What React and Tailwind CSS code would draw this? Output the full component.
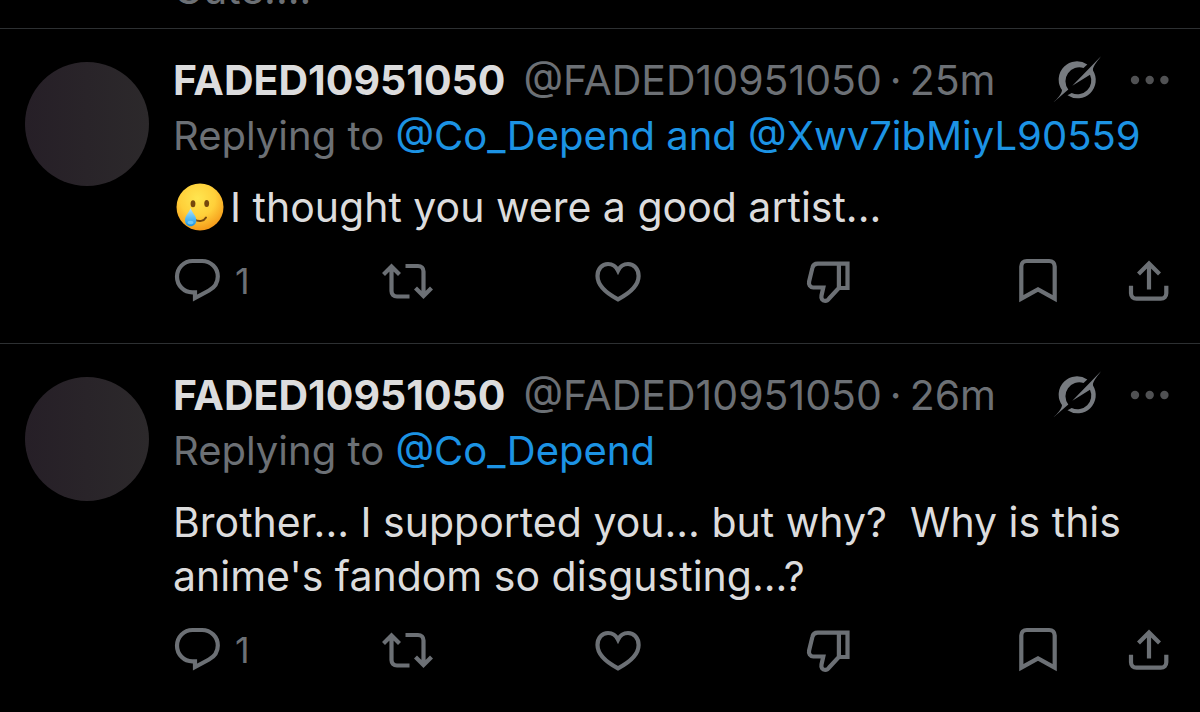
import React from 'react';

const tweets = [
  {
    id: 1,
    name: 'FADED10951050',
    handle: '@FADED10951050',
    time: '25m',
    replyingTo: ['@Co_Depend', '@Xwv7ibMiyL90559'],
    tearEmoji: true,
    text: 'I thought you were a good artist...',
    replies: 1,
  },
  {
    id: 2,
    name: 'FADED10951050',
    handle: '@FADED10951050',
    time: '26m',
    replyingTo: ['@Co_Depend'],
    tearEmoji: false,
    text: "Brother... I supported you... but why?\u00a0 Why is this anime's fandom so disgusting...?",
    replies: 1,
  },
];

const Icon = ({ children }) => (
  <svg
    viewBox="0 0 48 48"
    className="size-12 shrink-0 overflow-visible"
    fill="none"
    stroke="currentColor"
    strokeWidth="4.2"
    aria-hidden="true"
  >
    {children}
  </svg>
);

const ReplyIcon = () => (
  <Icon>
    <path d="M19.500 4h9.500C38 4 44.800 11 44.800 19.500c0 6.500-3.300 11-8.800 14L22 41V35.300h-2.500C10.800 35.300 4 28.300 4 19.700S10.800 4 19.500 4Z" />
  </Icon>
);

const RepostIcon = () => (
  <Icon>
    <path d="M.5 17.500l8-8 8 8M8.500 10v24c0 3.300 2.200 5.500 5.500 5.500h12.500M22.500 9H35c3.300 0 5.500 2.200 5.500 5.500V38.500M32.500 31l8 8 8-8" />
  </Icon>
);

const LikeIcon = () => (
  <Icon>
    <path d="M24 13.500C22 9.500 18 7 14 7 8 7 3.500 12 3.500 19c0 8.500 7.500 16.500 20.500 23.300C37 35.500 44.600 27.500 44.600 19c0-7-4.600-12-10.600-12-4 0-8 2.500-10 6.500Z" />
  </Icon>
);

const DislikeIcon = () => (
  <Icon>
    <path d="M34.900 6.700H13.700c-2.800 0-4.700 1.400-5.300 4.200L5.100 24.500c-.7 3.200 1 6 4.200 6h10l-1.800 8c-.6 3.200.9 5.400 3.600 5.400 2 0 3.300-1 4.200-2.600L34.900 31ZM34.900 6.700h8.600V31h-8.600" />
  </Icon>
);

const BookmarkIcon = () => (
  <Icon>
    <path d="M7.300 41.700V9.500C7.300 6.200 9.500 4 12.800 4h22.400c3.300 0 5.500 2.200 5.500 5.500v32.200L24 32.300Z" />
  </Icon>
);

const ShareIcon = () => (
  <Icon>
    <path d="M13.500 17L24 6.500 34.500 17M24 7v25.500M6 28.700v7.500c0 3.300 2.200 5.500 5.500 5.500h24.300c3.300 0 5.500-2.200 5.500-5.500v-7.500" />
  </Icon>
);

const GrokIcon = () => (
  <svg viewBox="0 0 48 48" className="size-12" fill="currentColor" aria-hidden="true">
    <path d="M34.300 8.600A18.200 18.200 0 0 0 9 34C9 37.500 5 42 .3 46.500L15.300 33.500A13.800 13.800 0 0 1 30.500 12Z" />
    <path d="M14.500 39.300A18.200 18.200 0 0 0 40 14.500C39.500 11 43 7 48 .3L19.300 29.700 37 18.700A13.800 13.800 0 0 1 18.700 37Z" />
  </svg>
);

const MoreIcon = () => (
  <svg viewBox="0 0 48 48" className="size-12" fill="currentColor" aria-hidden="true">
    <circle cx="10" cy="24" r="4.200" />
    <circle cx="24.700" cy="24" r="4.200" />
    <circle cx="39.400" cy="24" r="4.200" />
  </svg>
);

const TearEmoji = () => (
  <svg
    viewBox="0 0 48 48"
    className="mr-1.5 ml-[3px] inline-block size-12 align-[-9px]"
    role="img"
    aria-label="Smiling face with tear"
  >
    <defs>
      <radialGradient id="face" cx="45%" cy="32%" r="68%">
        <stop offset="0" stopColor="#ffe650" />
        <stop offset="0.550" stopColor="#ffd03a" />
        <stop offset="1" stopColor="#f59a1a" />
      </radialGradient>
      <linearGradient id="tear" x1="0" y1="0" x2="0" y2="1">
        <stop offset="0" stopColor="#b9e6fb" />
        <stop offset="0.500" stopColor="#5fc0f5" />
        <stop offset="1" stopColor="#1c93e0" />
      </linearGradient>
    </defs>
    <circle cx="24" cy="24" r="23.500" fill="url(#face)" />
    <ellipse cx="17" cy="20.700" rx="2.400" ry="3.500" fill="#76480d" />
    <ellipse cx="30.700" cy="20.500" rx="2.400" ry="3.500" fill="#76480d" />
    <path d="M18.500 36.500c4.500 2.800 9.500 1.500 11.500-2" fill="none" stroke="#76480d" strokeWidth="2" strokeLinecap="round" />
    <path d="M14.500 25c-1.500 4.800-5.500 7.500-5.500 12.300 0 3.700 2.500 6 5.600 6 3.200 0 5.700-2.400 5.700-6 0-4.800-4.200-7.500-5.800-12.300Z" fill="url(#tear)" />
    <ellipse cx="14.500" cy="39.500" rx="3" ry="1.800" fill="#8fe0ff" opacity="0.600" />
  </svg>
);

const Tweet = ({ tweet }) => (
  <article className="flex gap-6 border-b border-[#2d3032] pt-[23px] pr-[27px] pb-[38px] pl-[25px] last:border-b-0 last:pb-8">
    <div className="mt-[10px] size-[124px] shrink-0 rounded-full bg-linear-to-r from-[#261f27] to-[#2c292b]"></div>

    <div className="min-w-0 flex-1">
      <header className="flex h-14 items-center justify-between">
        <div className="flex items-baseline leading-14 whitespace-nowrap">
          <h2 className="mr-[18px] font-bold text-[#dcdcdd]">{tweet.name}</h2>
          <span>{tweet.handle}</span>
          <span className="mx-2">·</span>
          <time>{tweet.time}</time>
        </div>
        <div className="flex items-center gap-6">
          <button type="button" aria-label="Explain this post" className="text-[#777b80]">
            <GrokIcon />
          </button>
          <button type="button" aria-label="More" className="text-[#505153]">
            <MoreIcon />
          </button>
        </div>
      </header>

      <p className="text-[40px] leading-14 whitespace-nowrap">
        Replying to{' '}
        {tweet.replyingTo.map((user, i) => (
          <span key={user} className="text-[#1c93e4]">
            {i > 0 && ' and '}
            <a href={`#${user}`}>{user}</a>
          </span>
        ))}
      </p>

      <p className="mt-4 leading-[54px] text-[#dcdcdd]">
        {tweet.tearEmoji && <TearEmoji />}
        {tweet.text}
      </p>

      {/* Actions */}
      <div className="mt-[23px] flex items-center">
        <button type="button" aria-label="Reply" className="flex flex-1 items-center gap-3.5 text-4xl">
          <ReplyIcon />
          {tweet.replies}
        </button>
        <button type="button" aria-label="Repost" className="flex-1">
          <RepostIcon />
        </button>
        <button type="button" aria-label="Like" className="flex-1">
          <LikeIcon />
        </button>
        <button type="button" aria-label="Dislike" className="flex-1">
          <DislikeIcon />
        </button>
        <div className="flex gap-[63px]">
          <button type="button" aria-label="Bookmark">
            <BookmarkIcon />
          </button>
          <button type="button" aria-label="Share">
            <ShareIcon />
          </button>
        </div>
      </div>
    </div>
  </article>
);

const App = () => {
  return (
    <main className="min-h-screen bg-black font-['Inter',sans-serif] text-[41px] text-[#6c7075]">
      {/* End of the post scrolled off the top */}
      <div className="flex h-[29px] items-end overflow-hidden border-b border-[#2d3032] pb-3 pl-[173px]">
        <p className="leading-[54px]">Cute....</p>
      </div>

      {tweets.map((tweet) => (
        <Tweet key={tweet.id} tweet={tweet} />
      ))}
    </main>
  );
};

export default App;
